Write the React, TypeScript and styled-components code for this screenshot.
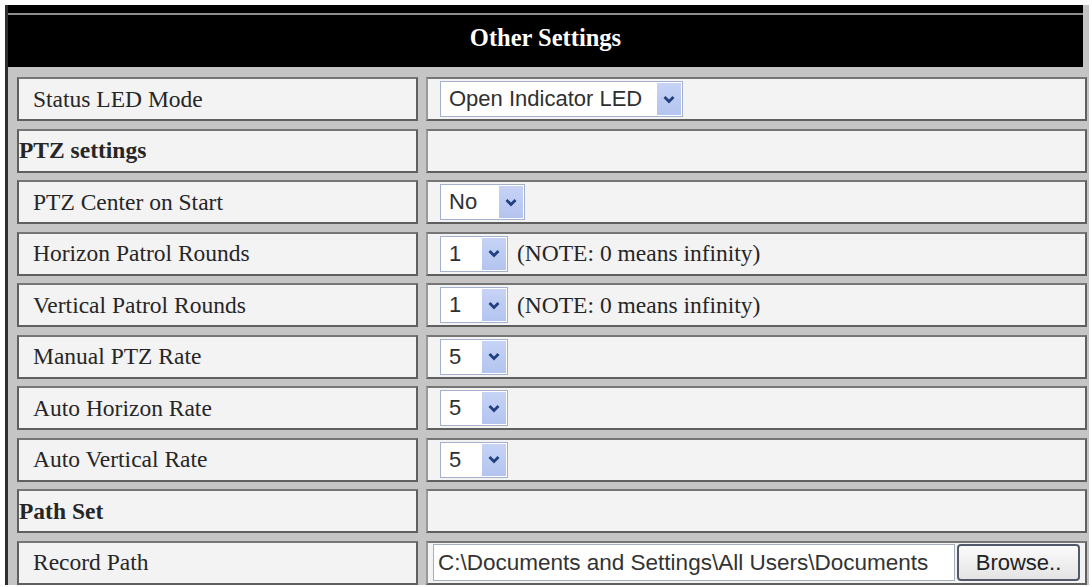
import styled, { createGlobalStyle } from "styled-components";

type Row =
  | { kind: "section"; label: string }
  | { kind: "select"; label: string; value: string; width: number; note?: string }
  | { kind: "path"; label: string; value: string };

const rows: Row[] = [
  { kind: "select", label: "Status LED Mode", value: "Open Indicator LED", width: 243 },
  { kind: "section", label: "PTZ settings" },
  { kind: "select", label: "PTZ Center on Start", value: "No", width: 85 },
  {
    kind: "select",
    label: "Horizon Patrol Rounds",
    value: "1",
    width: 68,
    note: "(NOTE: 0 means infinity)",
  },
  {
    kind: "select",
    label: "Vertical Patrol Rounds",
    value: "1",
    width: 68,
    note: "(NOTE: 0 means infinity)",
  },
  { kind: "select", label: "Manual PTZ Rate", value: "5", width: 68 },
  { kind: "select", label: "Auto Horizon Rate", value: "5", width: 68 },
  { kind: "select", label: "Auto Vertical Rate", value: "5", width: 68 },
  { kind: "section", label: "Path Set" },
  {
    kind: "path",
    label: "Record Path",
    value: "C:\\Documents and Settings\\All Users\\Documents",
  },
];

function Chevron() {
  return (
    <svg width="12" height="9" viewBox="0 0 12 9">
      <path d="M1.5 2 L6 6.5 L10.5 2" fill="none" stroke="#23407e" strokeWidth="2.8" />
    </svg>
  );
}

function Select({ value, width }: { value: string; width: number }) {
  return (
    <SelectBox $width={width}>
      <SelectValue>{value}</SelectValue>
      <ArrowButton>
        <Chevron />
      </ArrowButton>
    </SelectBox>
  );
}

function App() {
  return (
    <>
      <GlobalStyle />
      <Panel>
        <Header>Other Settings</Header>
        <Grid>
          {rows.map((row) => (
            <RowWrap key={row.label}>
              <LabelCell $section={row.kind === "section"}>{row.label}</LabelCell>
              {row.kind === "section" && <ValueCell />}
              {row.kind === "select" && (
                <ValueCell>
                  <Select value={row.value} width={row.width} />
                  {row.note && <Note>{row.note}</Note>}
                </ValueCell>
              )}
              {row.kind === "path" && (
                <ValueCell $tight>
                  <PathInput>{row.value}</PathInput>
                  <BrowseButton>Browse..</BrowseButton>
                </ValueCell>
              )}
            </RowWrap>
          ))}
        </Grid>
      </Panel>
    </>
  );
}

const GlobalStyle = createGlobalStyle`
  html, body {
    margin: 0;
    padding: 0;
    background: #ffffff;
    overflow: hidden;
  }
  body {
    font-family: "Liberation Serif", "Times New Roman", serif;
  }
`;

const Panel = styled.div`
  margin: 5px 0 0 5px;
  width: 1084px;
  border-left: 3px solid #2e2e2e;
  background: #c5c5c5;
  box-sizing: border-box;
`;

const Header = styled.div`
  height: 62px;
  margin-right: 6px;
  background: linear-gradient(
    to bottom,
    #000 0,
    #000 8px,
    #8c8c8c 8px,
    #8c8c8c 10px,
    #000 10px
  );
  color: #ffffff;
  font-family: "Liberation Serif", "Times New Roman", serif;
  font-weight: bold;
  font-size: 24.5px;
  display: flex;
  align-items: center;
  justify-content: center;
  padding-top: 4px;
  box-sizing: border-box;
`;

const Grid = styled.div`
  display: grid;
  grid-template-columns: 401px 661px;
  column-gap: 8px;
  row-gap: 7.5px;
  padding: 10px 2px 0 9px;
`;

const RowWrap = styled.div`
  display: contents;
`;

const Cell = styled.div`
  height: 44px;
  box-sizing: border-box;
  border: 2px solid #5f5f5f;
  border-top-color: #767676;
  background: #f3f3f3;
  display: flex;
  align-items: center;
`;

const LabelCell = styled(Cell)<{ $section?: boolean }>`
  padding-left: ${(p) => (p.$section ? "0" : "14px")};
  font-family: "Liberation Serif", "Times New Roman", serif;
  font-size: 23.5px;
  font-weight: ${(p) => (p.$section ? "bold" : "normal")};
  color: #262626;
  white-space: nowrap;
`;

const ValueCell = styled(Cell)<{ $tight?: boolean }>`
  padding-left: ${(p) => (p.$tight ? "5px" : "12px")};
  border-left-color: #9a9a9a;
`;

const SelectBox = styled.div<{ $width: number }>`
  width: ${(p) => p.$width}px;
  height: 36px;
  box-sizing: border-box;
  border: 1px solid #a3b1cc;
  background: #ffffff;
  display: flex;
  align-items: stretch;
  padding: 1px;
`;

const SelectValue = styled.span`
  flex: 1;
  display: flex;
  align-items: center;
  padding-left: 7px;
  font-family: "Liberation Sans", Arial, sans-serif;
  font-size: 22px;
  color: #303030;
  white-space: nowrap;
`;

const ArrowButton = styled.span`
  width: 24px;
  display: flex;
  align-items: center;
  justify-content: center;
  background: linear-gradient(to bottom, #c6d3f6, #b3c4ef);
`;

const Note = styled.span`
  margin-left: 9px;
  font-family: "Liberation Serif", "Times New Roman", serif;
  font-size: 23.5px;
  color: #262626;
  white-space: nowrap;
`;

const PathInput = styled.div`
  width: 522px;
  height: 37px;
  box-sizing: border-box;
  border: 1px solid #a6adbd;
  background: #ffffff;
  display: flex;
  align-items: center;
  padding-left: 4px;
  font-family: "Liberation Sans", Arial, sans-serif;
  font-size: 22.5px;
  color: #333333;
  white-space: nowrap;
  overflow: hidden;
`;

const BrowseButton = styled.div`
  margin-left: 2px;
  width: 123px;
  height: 37px;
  box-sizing: border-box;
  border: 2px solid #525a6a;
  border-radius: 4px;
  background: linear-gradient(to bottom, #fbfbfb, #e4e4e4);
  display: flex;
  align-items: center;
  justify-content: center;
  font-family: "Liberation Sans", Arial, sans-serif;
  font-size: 22px;
  color: #222222;
`;

export default App;
